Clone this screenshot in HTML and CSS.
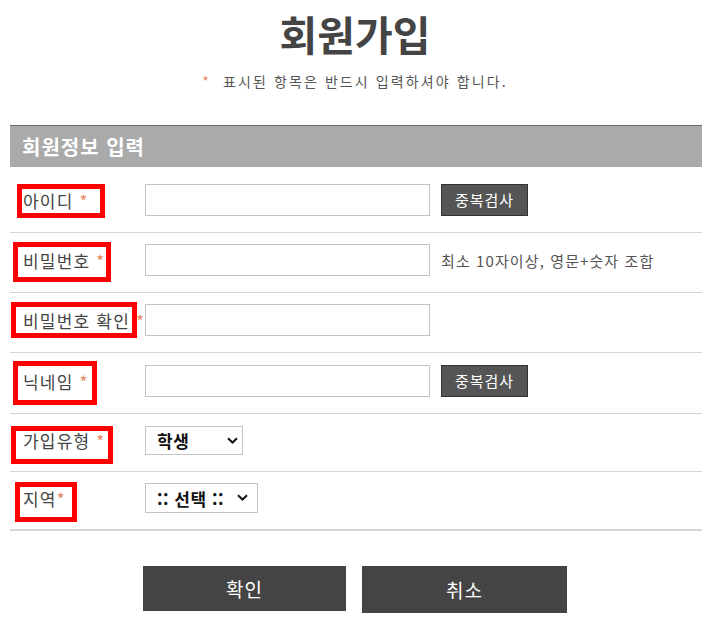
FILE: index.html
```html
<!DOCTYPE html>
<html lang="ko">
<head>
<meta charset="utf-8">
<title>회원가입</title>
<link rel="stylesheet" href="styles.css">
</head>
<body>
<h1 class="title">회원가입</h1>
<p class="notice"><span class="req">*</span> 표시된 항목은 반드시 입력하셔야 합니다.</p>

<section class="panel">
  <h2 class="panel-head">회원정보 입력</h2>

  <div class="row row-first">
    <div class="label"><span class="mark mark-id">아이디 <em class="req">*</em></span></div>
    <div class="field">
      <input class="text" type="text">
      <button class="btn-check" type="button">중복검사</button>
    </div>
  </div>

  <div class="row">
    <div class="label"><span class="mark mark-pw">비밀번호 <em class="req">*</em></span></div>
    <div class="field">
      <input class="text" type="password">
      <span class="hint">최소 10자이상, 영문+숫자 조합</span>
    </div>
  </div>

  <div class="row">
    <div class="label"><span class="mark mark-pw2">비밀번호 확인 <em class="req">*</em></span></div>
    <div class="field">
      <input class="text" type="password">
    </div>
  </div>

  <div class="row row-mid">
    <div class="label"><span class="mark mark-nick">닉네임 <em class="req">*</em></span></div>
    <div class="field">
      <input class="text" type="text">
      <button class="btn-check" type="button">중복검사</button>
    </div>
  </div>

  <div class="row row-mid">
    <div class="label"><span class="mark mark-type">가입유형 <em class="req">*</em></span></div>
    <div class="field">
      <span class="select-wrap select-type">
        <select class="select"><option>학생</option></select>
        <svg class="chev" width="11" height="7" viewBox="0 0 11 7"><path d="M1 1.2 L5.5 5.5 L10 1.2" fill="none" stroke="#111" stroke-width="2"/></svg>
      </span>
    </div>
  </div>

  <div class="row row-last">
    <div class="label"><span class="mark mark-area">지역<em class="req">*</em></span></div>
    <div class="field">
      <span class="select-wrap select-area">
        <select class="select"><option>:: 선택 ::</option></select>
        <svg class="chev" width="11" height="7" viewBox="0 0 11 7"><path d="M1 1.2 L5.5 5.5 L10 1.2" fill="none" stroke="#111" stroke-width="2"/></svg>
      </span>
    </div>
  </div>
</section>

<div class="actions">
  <button class="btn btn-ok" type="button">확인</button>
  <button class="btn btn-cancel" type="button">취소</button>
</div>
</body>
</html>
```

FILE: styles.css
```css
*, *::before, *::after { box-sizing: border-box; }

body {
  margin: 0;
  background: #fff;
  color: #444;
  font-family: "Noto Sans CJK KR", "Noto Sans", sans-serif;
}

.title {
  margin: 0;
  padding-top: 9px;
  font-size: 41px;
  line-height: 48px;
  font-weight: 700;
  text-align: center;
  color: #444;
}

.notice {
  margin: 14px 0 0;
  font-size: 14px;
  line-height: 20px;
  text-align: center;
  color: #555;
  letter-spacing: 2.1px;
}

.notice .req { margin-right: 6px; }

.req {
  color: #e58a5f;
  font-style: normal;
}

.panel {
  margin: 34px 8px 0 10px;
}

.panel-head {
  margin: 0;
  height: 42px;
  border-top: 1px solid #666;
  background: #aaa;
  color: #fff;
  font-size: 20px;
  line-height: 41px;
  font-weight: 700;
  letter-spacing: 1px;
  padding-left: 12px;
}

.row {
  display: flex;
  align-items: center;
  padding: 11px 0 16px;
  border-bottom: 1px solid #d5d5d5;
}

.row-first { padding-top: 17px; }
.row-mid { padding-top: 12px; }
.row-last { border-bottom-width: 2px; }

.label {
  width: 135px;
  flex: none;
  padding-left: 13px;
  font-size: 17px;
  letter-spacing: 1.2px;
  color: #444;
}

.mark {
  position: relative;
  display: inline-block;
  line-height: 20px;
  white-space: nowrap;
}

.mark::before {
  content: "";
  position: absolute;
  border: 5px solid #f00;
  z-index: 2;
}

.mark-id::before   { top: -7px;  left: -6px;  width: 88px;  height: 34px; }
.mark-pw::before   { top: -9px;  left: -10px; width: 98px;  height: 40px; }
.mark-pw2::before  { top: -9px;  left: -12px; width: 126px; height: 36px; }
.mark-nick::before { top: -11px; left: -10px; width: 84px;  height: 44px; }
.mark-type::before { top: -5px;  left: -12px; width: 102px; height: 38px; }
.mark-area::before { top: -7px;  left: -8px;  width: 62px;  height: 40px; }

.field {
  display: flex;
  align-items: center;
}

.text {
  width: 285px;
  height: 32px;
  margin: 0;
  border: 1px solid #c3c3c3;
  background: #fff;
  padding: 0 8px;
  font-family: inherit;
}

.btn-check {
  margin: 0 0 0 11px;
  width: 87px;
  height: 32px;
  padding: 0;
  background: #555;
  border: 1px solid #333;
  color: #fff;
  font-family: inherit;
  font-size: 15px;
  letter-spacing: 1px;
  line-height: 30px;
}

.hint {
  margin-left: 11px;
  font-size: 15px;
  letter-spacing: 1.1px;
  color: #555;
}

.select-wrap {
  position: relative;
  display: inline-block;
}

.select {
  appearance: none;
  -webkit-appearance: none;
  margin: 0;
  border: 1px solid #c3c3c3;
  background: #fff;
  color: #111;
  font-family: inherit;
  font-size: 17px;
  font-weight: 700;
  letter-spacing: 0.5px;
  padding: 0 0 0 11px;
  display: block;
}

.select-type .select { width: 98px; height: 29px; }
.select-area .select { width: 113px; height: 30px; }

.chev {
  position: absolute;
  top: 50%;
  margin-top: -4px;
  pointer-events: none;
}

.select-type .chev { right: 5px; }
.select-area .chev { right: 10px; }

.actions {
  display: flex;
  justify-content: center;
  align-items: flex-start;
  gap: 16px;
  margin-top: 35px;
}

.btn {
  padding: 0;
  border: 0;
  background: #444;
  color: #fff;
  font-family: inherit;
  font-size: 19px;
  letter-spacing: 1px;
}

.btn-ok { width: 203px; height: 45px; }
.btn-cancel { width: 205px; height: 47px; }
```
